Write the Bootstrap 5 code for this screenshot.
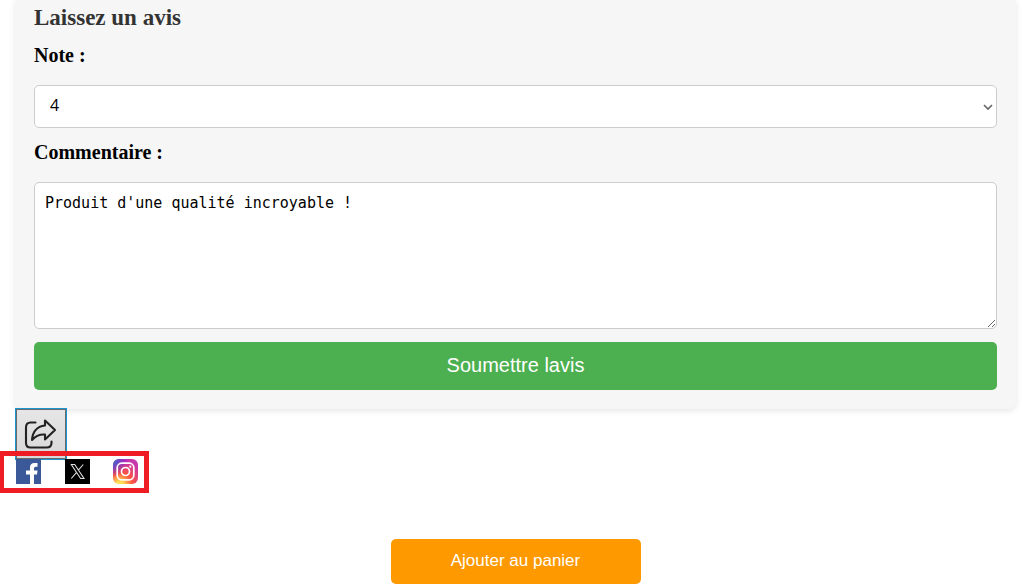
<!DOCTYPE html>
<html lang="fr">
<head>
<meta charset="utf-8">
<meta name="viewport" content="width=device-width, initial-scale=1">
<title>Laissez un avis</title>
<link href="https://cdn.jsdelivr.net/npm/bootstrap@5.3.0/dist/css/bootstrap.min.css" rel="stylesheet">
<style>
  body { background: #fff; color: #000; font-family: "Liberation Serif", "Times New Roman", serif; }
  .page { padding: 0 6px 0 15px; }
  .review-panel { background: #f6f6f6; border-radius: 0 0 8px 8px; box-shadow: 0 2px 6px rgba(0,0,0,.1); padding: 4px 19px 19px; }
  .review-title { color: #333; font-size: 23px; line-height: 28px; margin: 0 0 9px; font-weight: 700; }
  .review-label { display: block; font-size: 20px; line-height: 28px; font-weight: 700; margin: 0 0 16px; }
  .field { border: 1px solid #ccc; border-radius: 5px; color: #000; background-color: #fff; }
  .field-note { height: 43px; padding: 8px 15px 10px; margin-bottom: 10px; font: 16px/23px "Open Sans", sans-serif;
    background-image: url("data:image/svg+xml,%3Csvg xmlns='http://www.w3.org/2000/svg' viewBox='0 0 10 10'%3E%3Cpath d='M1 3l4 4 4-4' fill='none' stroke='%23666' stroke-width='1.6'/%3E%3C/svg%3E");
    background-size: 10px 10px; background-position: right 3px center; }
  .field-text { height: 147px; padding: 9px 10px; font: 15px/22px "DejaVu Sans Mono", monospace; margin-bottom: 13px; resize: vertical; }
  .btn-review, .btn-review:hover { background: #4caf50; color: #fff; border: 0; border-radius: 5px; height: 48px; font: 20px/24px "Liberation Sans", Arial, sans-serif; padding: 0 0 2px; }
  .share { height: 84px; position: relative; margin-top: -1px; }
  .share-toggle { width: 52px; height: 52px; padding: 0; border: 1px solid #1b94d2; box-shadow: inset 0 0 0 1px #6b6b6b; background: linear-gradient(#e6e6e6, #d8d8d8); display: block; }
  .share-menu { position: absolute; left: -15px; top: 43px; width: 149px; height: 42px; border: 5px solid #ee1c25; border-left-width: 4px; padding: 3px 6px 0 12px; }
  .share-menu a { width: 25px; height: 25px; }
  .share-menu svg, .share-toggle svg { display: block; }
  .btn-cart, .btn-cart:hover { background: #f90; color: #fff; border: 0; border-radius: 5px; width: 250px; height: 45px; font: 17px/20px "Liberation Sans", Arial, sans-serif; padding: 0 0 2px; }
  .cart-row { margin-top: 47px; padding-bottom: 3px; }
</style>
</head>
<body>
<main class="page">
  <form class="review-panel">
    <h2 class="review-title">Laissez un avis</h2>
    <label class="review-label" for="note">Note :</label>
    <select class="form-select field field-note" id="note">
      <option>1</option><option>2</option><option>3</option><option selected>4</option><option>5</option>
    </select>
    <label class="review-label" for="commentaire">Commentaire :</label>
    <textarea class="form-control field field-text" id="commentaire" spellcheck="false">Produit d'une qualité incroyable !</textarea>
    <button class="btn btn-review w-100 d-block" type="button">Soumettre lavis</button>
  </form>

  <div class="share">
    <button class="share-toggle" type="button" aria-label="Partager">
      <svg width="50" height="50" viewBox="0 0 50 50" fill="none" stroke="#222" stroke-width="2.1" stroke-linejoin="round" stroke-linecap="round">
        <path d="M19.500 13.500H14.500Q10 13.500 10 18.500V34Q10 38.500 14.500 38.500H30.500Q35.500 38.500 35.500 34V32.500"/>
        <path d="M29 11.500L39 21L29 30.500V25.500Q21 25 16 31Q17 18 29 16.500Z"/>
      </svg>
    </button>
    <nav class="share-menu d-flex justify-content-between" aria-label="Réseaux sociaux">
      <a href="#" aria-label="Facebook">
        <svg width="25" height="25" viewBox="0 0 25 25">
          <rect width="25" height="25" fill="#3b5998"/>
          <path fill="#fff" d="M14 25V15.500H10V11.500H14V8.500Q14 4 18.500 4H21.500V7.700H19.500Q18 7.700 18 9.300V11.500H21.500L21 15.500H18V25Z"/>
        </svg>
      </a>
      <a href="#" aria-label="X">
        <svg width="25" height="25" viewBox="0 0 25 25">
          <rect width="25" height="25" fill="#000"/>
          <path d="M6.300 5.500H9.700L19 19.500H15.600ZM18.300 5.500L13.300 11.200M11.600 13.300L6.300 19.500" fill="none" stroke="#ddd" stroke-width="1.100"/>
        </svg>
      </a>
      <a href="#" aria-label="Instagram">
        <svg width="25" height="25" viewBox="0 0 25 25">
          <defs>
            <radialGradient id="igWarm" cx="27%" cy="105%" r="100%">
              <stop offset="0" stop-color="#fd5"/><stop offset=".15" stop-color="#fd5"/>
              <stop offset=".5" stop-color="#ff543e"/><stop offset="1" stop-color="#c837ab"/>
            </radialGradient>
            <radialGradient id="igBlue" cx="-10%" cy="0%" r="75%">
              <stop offset="0" stop-color="#3771c8"/><stop offset=".2" stop-color="#3771c8"/>
              <stop offset="1" stop-color="#60f" stop-opacity="0"/>
            </radialGradient>
          </defs>
          <rect width="25" height="25" rx="6" fill="url(#igWarm)"/>
          <rect width="25" height="25" rx="6" fill="url(#igBlue)"/>
          <rect x="4.200" y="4.200" width="16.600" height="16.600" rx="4.500" fill="none" stroke="#fff" stroke-width="1.700"/>
          <circle cx="12.500" cy="12.500" r="4" fill="none" stroke="#fff" stroke-width="1.700"/>
          <circle cx="17.300" cy="7.700" r="1.100" fill="#fff"/>
        </svg>
      </a>
    </nav>
  </div>

  <div class="cart-row text-center">
    <button class="btn btn-cart" type="button">Ajouter au panier</button>
  </div>
</main>
<script src="https://cdn.jsdelivr.net/npm/bootstrap@5.3.0/dist/js/bootstrap.bundle.min.js"></script>
</body>
</html>
